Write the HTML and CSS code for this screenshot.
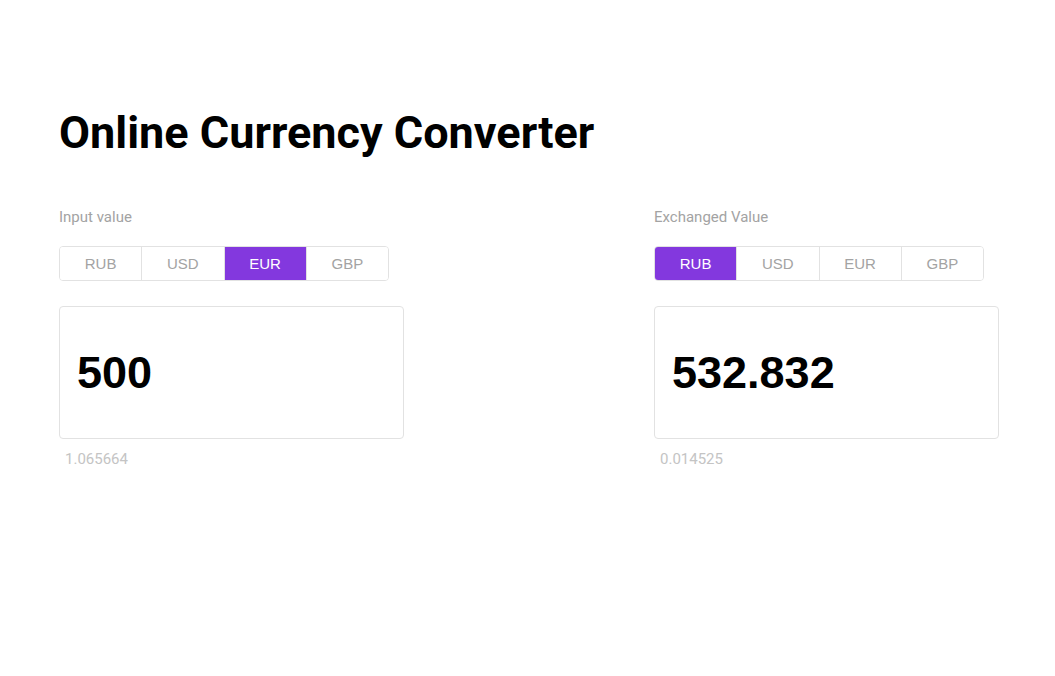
FILE: index.html
```html
<!DOCTYPE html>
<html lang="en">
<head>
<meta charset="utf-8">
<title>Online Currency Converter</title>
<link rel="stylesheet" href="styles.css">
</head>
<body>
<main class="app">
  <h1 class="title">Online Currency Converter</h1>
  <div class="columns">
    <section class="panel">
      <div class="label">Input value</div>
      <div class="switch">
        <button class="cur">RUB</button>
        <button class="cur">USD</button>
        <button class="cur active">EUR</button>
        <button class="cur">GBP</button>
      </div>
      <div class="field"><span class="amount">500</span></div>
      <div class="rate">1.065664</div>
    </section>
    <section class="panel">
      <div class="label">Exchanged Value</div>
      <div class="switch">
        <button class="cur active">RUB</button>
        <button class="cur">USD</button>
        <button class="cur">EUR</button>
        <button class="cur">GBP</button>
      </div>
      <div class="field"><span class="amount">532.832</span></div>
      <div class="rate">0.014525</div>
    </section>
  </div>
</main>
</body>
</html>
```
FILE: styles.css
```css
* { box-sizing: border-box; }
html, body { margin: 0; padding: 0; background: #fff; }
body { font-family: Roboto, "Liberation Sans", Arial, sans-serif; }

.app {
  width: 940px;
  margin-left: 59px;
  padding-top: 107px;
}

.title {
  margin: 0;
  font-family: Roboto, sans-serif;
  font-weight: 700;
  font-size: 45px;
  line-height: 52px;
  color: #000;
}

.columns {
  display: flex;
  justify-content: space-between;
  margin-top: 48px;
}

.panel {
  width: 345px;
  display: flex;
  flex-direction: column;
}

.label {
  font-size: 15px;
  line-height: 20px;
  color: #a3a3a3;
}

.switch {
  display: flex;
  width: 330px;
  height: 35px;
  margin-top: 19px;
  border: 1px solid #e2e2e2;
  border-radius: 4px;
  overflow: hidden;
}

.cur {
  flex: 1;
  border: 0;
  border-right: 1px solid #e2e2e2;
  background: #fff;
  font-family: "Liberation Sans", Arial, sans-serif;
  font-size: 15px;
  color: #a3a3a3;
  padding: 0;
  margin: 0;
}
.cur:last-child { border-right: 0; }
.cur.active {
  background: #8338de;
  color: #fff;
}

.field {
  margin-top: 25px;
  height: 133px;
  border: 1px solid #e2e2e2;
  border-radius: 4px;
  display: flex;
  align-items: center;
  padding-left: 17px;
}

.amount {
  font-family: "Liberation Sans", Arial, sans-serif;
  font-weight: 700;
  font-size: 45px;
  color: #000;
}

.rate {
  margin-top: 10px;
  padding-left: 6px;
  font-size: 15px;
  line-height: 20px;
  color: #c4c4c4;
}
```
